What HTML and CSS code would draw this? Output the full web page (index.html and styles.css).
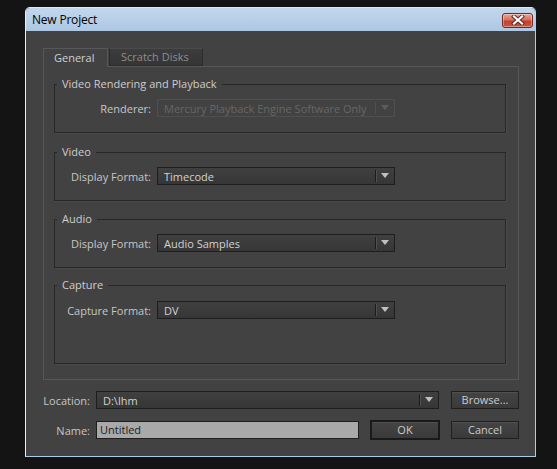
FILE: index.html
```html
<!DOCTYPE html>
<html>
<head>
<meta charset="utf-8">
<link rel="stylesheet" href="styles.css">
</head>
<body>
<div class="window">
  <div class="titlebar">
    <span class="title">New Project</span>
    <div class="close">
      <svg width="14" height="10" viewBox="0 0 14 10">
        <path d="M3 1.5 L11 8.5 M11 1.5 L3 8.5" stroke="#5a2520" stroke-width="4" stroke-linecap="square"/>
        <path d="M3 1.5 L11 8.5 M11 1.5 L3 8.5" stroke="#ffffff" stroke-width="2.2" stroke-linecap="square"/>
      </svg>
    </div>
  </div>
  <div class="client">
    <div class="tabs">
      <div class="tab active">General</div>
      <div class="tab">Scratch Disks</div>
    </div>
    <div class="panel">
      <fieldset class="group g1">
        <legend>Video Rendering and Playback</legend>
        <div class="field">
          <span class="label">Renderer:</span>
          <div class="select disabled"><span class="value">Mercury Playback Engine Software Only</span><span class="arrow"></span></div>
        </div>
      </fieldset>
      <fieldset class="group g2">
        <legend>Video</legend>
        <div class="field">
          <span class="label">Display Format:</span>
          <div class="select"><span class="value">Timecode</span><span class="arrow"></span></div>
        </div>
      </fieldset>
      <fieldset class="group g3">
        <legend>Audio</legend>
        <div class="field">
          <span class="label">Display Format:</span>
          <div class="select"><span class="value">Audio Samples</span><span class="arrow"></span></div>
        </div>
      </fieldset>
      <fieldset class="group tall">
        <legend>Capture</legend>
        <div class="field">
          <span class="label">Capture Format:</span>
          <div class="select"><span class="value">DV</span><span class="arrow"></span></div>
        </div>
      </fieldset>
    </div>
    <div class="bottom">
      <div class="brow loc">
        <span class="blabel">Location:</span>
        <div class="select wide"><span class="value">D:\lhm</span><span class="arrow"></span></div>
        <div class="btn">Browse...</div>
      </div>
      <div class="brow name">
        <span class="blabel">Name:</span>
        <div class="input">Untitled</div>
        <div class="btn default">OK</div>
        <div class="btn">Cancel</div>
      </div>
    </div>
  </div>
</div>
</body>
</html>
```

FILE: styles.css
```css
* { box-sizing: border-box; }
html, body {
  margin: 0;
  padding: 0;
  background: #141414;
  width: 557px;
  height: 469px;
  overflow: hidden;
  font-family: "Open Sans", "Noto Sans", sans-serif;
  font-size: 11px;
}
.window {
  margin: 7px 0 0 25px;
  width: 511px;
  height: 450px;
  border: 1px solid #a9cfe6;
  border-left-color: #e6f0f8;
  border-top-color: #dce8f4;
  border-radius: 5px 5px 0 0;
  display: flex;
  flex-direction: column;
  overflow: hidden;
}
.titlebar {
  height: 23px;
  background: linear-gradient(#c2d7ed, #adc7e3);
  display: flex;
  align-items: center;
  justify-content: space-between;
  padding: 0 2px 0 6px;
}
.title {
  color: #000;
  font-size: 12px;
  letter-spacing: -0.2px;
}
.close {
  width: 31px;
  height: 15px;
  margin-top: 1px;
  border: 1px solid #6e2b26;
  border-radius: 3px;
  background: linear-gradient(#eaa596 0%, #d7705f 45%, #c2422f 55%, #c8563f 100%);
  box-shadow: inset 0 0 0 1px rgba(255,255,255,0.35);
  display: flex;
  align-items: center;
  justify-content: center;
}
.client {
  flex: 1;
  background: #424242;
  padding: 16px 16px 0 17px;
  display: flex;
  flex-direction: column;
}
.tabs {
  display: flex;
  height: 19px;
  align-items: flex-end;
}
.tab {
  height: 19px;
  line-height: 17px;
  padding: 0 0 0 10px;
  white-space: nowrap;
  color: #cfcfcf;
  border: 1px solid #575757;
  border-bottom: none;
  background: #424242;
  position: relative;
  top: 1px;
}
.tab.active {
  width: 65px;
}
.tab + .tab {
  height: 18px;
  width: 94px;
  margin-left: 1px;
  padding-left: 11px;
  color: #8e8e8e;
  background: linear-gradient(#3c3c3c, #353535);
  border: 1px solid #2c2c2c;
  border-top-color: #4b4b4b;
  top: 0;
  line-height: 16px;
}
.panel {
  border: 1px solid #575757;
  height: 314px;
  padding: 9px 12px 0 10px;
}
.group {
  margin: 0;
  padding: 7px 0 15px 0;
  border: 1px solid #272727;
  box-shadow: 1px 1px 0 #4a4a4a;
  min-width: 0;
}
.g1 { margin-bottom: 11px; }
.g2 { margin-bottom: 10px; }
.g3 { margin-bottom: 9px; }
.group.tall {
  padding-top: 8px;
  padding-bottom: 44px;
}
legend {
  color: #cdcdcd;
  line-height: 16px;
  height: 16px;
  padding: 0 5px;
  margin-left: 2px;
}
.field {
  display: flex;
  align-items: center;
  gap: 6px;
  height: 18px;
}
.label {
  width: 96px;
  text-align: right;
  color: #c6c6c6;
}
.select {
  width: 238px;
  height: 18px;
  border: 1px solid #1e1e1e;
  background: linear-gradient(#404040, #363636);
  display: flex;
  align-items: center;
  color: #d2d2d2;
}
.select .value {
  flex: 1;
  padding-left: 6px;
  white-space: nowrap;
  overflow: hidden;
}
.select .arrow {
  width: 19px;
  height: 12px;
  border-left: 1px solid #1c1c1c;
  box-shadow: 1px 0 0 #505050 inset;
  position: relative;
  flex: none;
}
.select .arrow::after {
  content: "";
  position: absolute;
  left: 5px;
  top: 3px;
  border-left: 4px solid transparent;
  border-right: 4px solid transparent;
  border-top: 5px solid #c0c0c0;
}
.select.disabled {
  background: #424242;
  border-color: #4f4f4f;
  color: #666;
}
.select.disabled .arrow {
  border-left-color: #4f4f4f;
  box-shadow: none;
}
.select.disabled .arrow::after {
  border-top-color: #5c5c5c;
}
.bottom {
  padding-top: 11px;
  display: flex;
  flex-direction: column;
  gap: 12px;
}
.brow {
  display: flex;
  align-items: center;
  height: 18px;
}
.blabel {
  width: 47px;
  text-align: right;
  color: #c6c6c6;
  margin-right: 6px;
}
.select.wide {
  width: 343px;
  margin-right: 12px;
}
.btn {
  width: 68px;
  height: 18px;
  border: 1px solid #1f1f1f;
  background: linear-gradient(#444444, #3a3a3a);
  box-shadow: inset 0 1px 0 #505050;
  color: #cccccc;
  text-align: center;
  line-height: 16px;
  flex: none;
}
.input {
  width: 263px;
  height: 18px;
  border: 1px solid #1f1f1f;
  background: #a9a9a9;
  color: #1c1c1c;
  padding-left: 3px;
  line-height: 16px;
  margin-right: 11px;
}
.btn.default {
  width: 70px;
  height: 20px;
  border: 2px solid #1a1a1a;
  margin-right: 11px;
}
```
